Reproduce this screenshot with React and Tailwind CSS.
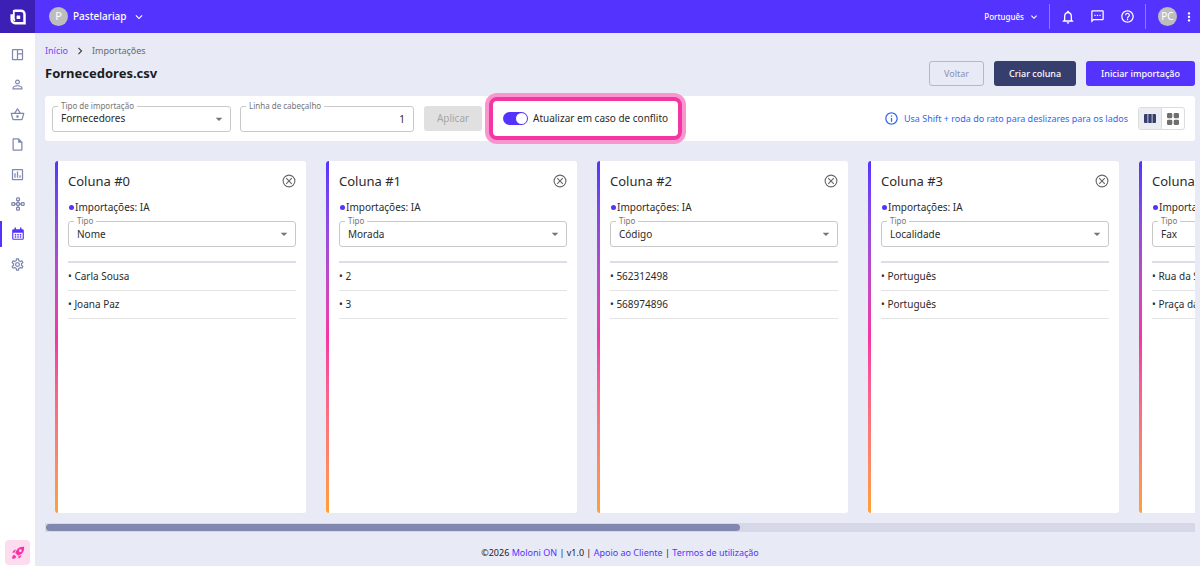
import { useState } from 'react'
import {
  MdOutlineSpaceDashboard,
  MdPersonOutline,
  MdOutlineShoppingBasket,
  MdOutlineInsertDriveFile,
  MdOutlineAssessment,
  MdOutlineSettings,
  MdKeyboardArrowDown,
  MdKeyboardArrowRight,
  MdNotificationsNone,
  MdOutlineSms,
  MdHelpOutline,
  MdMoreVert,
  MdInfoOutline,
  MdArrowDropDown
} from 'react-icons/md'

const columns = [
  { type: 'Nome', rows: ['Carla Sousa', 'Joana Paz'] },
  { type: 'Morada', rows: ['2', '3'] },
  { type: 'Código', rows: ['562312498', '568974896'] },
  { type: 'Localidade', rows: ['Português', 'Português'] },
  { type: 'Fax', rows: ['Rua da Saudade', 'Praça da Liberdade'] }
]

const types = ['Nome', 'Morada', 'Código', 'Localidade', 'Fax']

function Logo() {
  return (
    <svg viewBox="0 0 16 16" className="w-4 h-4" fill="none" stroke="#fff">
      <path d="M4.200 1.700H11a3.500 3.500 0 0 1 3.500 3.500v9H5.200a3.500 3.500 0 0 1-3.500-3.500V5.200" strokeWidth="2.500" />
      <path d="M3.800 1v8.500a2.500 2.500 0 0 0 1.200 2.200" strokeWidth="1.800" />
      <rect x="6.600" y="6.400" width="3.600" height="3.600" rx="0.6" fill="#fff" stroke="none" />
    </svg>
  )
}

function NodesIcon() {
  return (
    <svg viewBox="0 0 24 24" className="w-[14px] h-[14px]" fill="none" stroke="currentColor" strokeWidth="2.200">
      <rect x="9.600" y="1.500" width="4.800" height="4.800" rx="1.200" />
      <rect x="9.600" y="9.600" width="4.800" height="4.800" rx="1.200" />
      <rect x="9.600" y="17.700" width="4.800" height="4.800" rx="1.200" />
      <rect x="1.500" y="9.600" width="4.800" height="4.800" rx="1.200" />
      <rect x="17.700" y="9.600" width="4.800" height="4.800" rx="1.200" />
      <path d="M12 6.300v3.300M12 14.400v3.300M6.300 12h3.300M14.400 12h3.300" />
    </svg>
  )
}

function CalendarIcon() {
  return (
    <svg viewBox="0 0 24 24" className="w-[14px] h-[14px]" fill="currentColor">
      <path
        fillRule="evenodd"
        d="M6 1h2.500v3h7V1H18v3h1.500A2.500 2.500 0 0 1 22 6.500v13a2.500 2.500 0 0 1-2.500 2.500h-15A2.500 2.500 0 0 1 2 19.500v-13A2.500 2.500 0 0 1 4.500 4H6zM4 10v9.500a.5.5 0 0 0 .5.5h15a.5.5 0 0 0 .5-.5V10z"
      />
      <path d="M6.500 12h2.400v2.400H6.500zM10.800 12h2.400v2.400h-2.400zM15.100 12h2.400v2.400h-2.400zM6.500 16h2.400v2.400H6.500zM10.800 16h2.400v2.400h-2.400zM15.100 16h2.400v2.400h-2.400z" />
    </svg>
  )
}

function RocketIcon() {
  return (
    <svg viewBox="0 0 24 24" className="w-[14px] h-[14px]" fill="currentColor">
      <path
        fillRule="evenodd"
        d="M22.500 1.500c-6.500-.6-11 2-14 7.500l-1 3 4.500 4.500 3-1c5.500-3 8.100-7.500 7.500-14zM16 5.700a2.300 2.300 0 1 0 0 4.600 2.300 2.300 0 0 0 0-4.600z"
      />
      <path d="M8.500 6 5.500 7 2 11l4 .5zM18 15.500 17 18.500 13 22l-.5-4zM5.500 15c-2.500.5-3.500 3-3.500 7 4 0 6.500-1 7-3.500z" />
    </svg>
  )
}

function CloseIcon() {
  return (
    <svg viewBox="0 0 14 14" className="w-[14px] h-[14px]" fill="none" stroke="currentColor" strokeWidth="1.100">
      <circle cx="7" cy="7" r="5.900" />
      <path d="m4.200 4.200 5.600 5.600M9.800 4.200 4.200 9.800" />
    </svg>
  )
}

function Sidebar() {
  const items = [
    { name: 'Painel', icon: <MdOutlineSpaceDashboard size={15} /> },
    { name: 'Clientes', icon: <MdPersonOutline size={15} /> },
    { name: 'Vendas', icon: <MdOutlineShoppingBasket size={15} /> },
    { name: 'Documentos', icon: <MdOutlineInsertDriveFile size={15} /> },
    { name: 'Relatórios', icon: <MdOutlineAssessment size={15} /> },
    { name: 'Integrações', icon: <NodesIcon /> },
    { name: 'Ferramentas', icon: <CalendarIcon />, active: true },
    { name: 'Definições', icon: <MdOutlineSettings size={15} /> }
  ]

  return (
    <nav className="w-[35px] shrink-0 bg-white flex flex-col items-center pt-[6px] pb-px">
      {items.map(item => (
        <a
          key={item.name}
          href="#"
          aria-label={item.name}
          className={`w-full h-[30px] flex items-center justify-center ${
            item.active ? 'text-[#5533ff]' : 'text-[#8088b0]'
          }`}
        >
          <span className={`w-full h-[26px] flex items-center justify-center border-l-2 border-r-2 border-r-transparent ${
            item.active ? 'border-l-[#5533ff]' : 'border-l-transparent'
          }`}>
            {item.icon}
          </span>
        </a>
      ))}
      <button
        aria-label="Novidades"
        className="mt-auto w-[25px] h-[25px] rounded-sm bg-[#fddcf0] text-[#f535a3] flex items-center justify-center"
      >
        <RocketIcon />
      </button>
    </nav>
  )
}

function Header() {
  return (
    <header className="h-[33px] shrink-0 bg-[#5533ff] text-white flex items-center">
      <a href="#" aria-label="Moloni ON" className="w-[35px] h-full bg-[#3c1fb5] flex items-center justify-center">
        <Logo />
      </a>
      <button className="ml-[14px] flex items-center text-[10px] font-medium">
        <span className="w-[19px] h-[19px] mr-[5px] rounded-full bg-[#bdbdbd] text-[11px] flex items-center justify-center font-normal">P</span>
        Pastelariap
        <MdKeyboardArrowDown size={14} className="ml-[5px]" />
      </button>
      <div className="ml-auto h-full flex items-center pr-1">
        <button className="flex items-center gap-1 text-[8px] font-medium mr-[9px]">
          Português
          <MdKeyboardArrowDown size={12} />
        </button>
        <div className="w-px h-[25px] bg-[#8f7aff]" />
        <button aria-label="Notificações" className="ml-[10px]"><MdNotificationsNone size={16} /></button>
        <button aria-label="Mensagens" className="ml-[14px]"><MdOutlineSms size={15} /></button>
        <button aria-label="Ajuda" className="ml-[15px]"><MdHelpOutline size={15} /></button>
        <div className="ml-[10px] w-px h-[25px] bg-[#8f7aff]" />
        <button className="ml-3 w-[19px] h-[19px] rounded-full bg-[#bdbdbd] text-[10px] flex items-center justify-center">PC</button>
        <button aria-label="Mais" className="ml-[5px]"><MdMoreVert size={14} /></button>
      </div>
    </header>
  )
}

function SelectField({ id, label, options, value, className }) {
  return (
    <div className={`relative ${className}`}>
      <label htmlFor={id} className="absolute left-[6px] -top-[5px] px-[3px] bg-white text-[8px] leading-[10px] text-[#757575]">
        {label}
      </label>
      <select
        id={id}
        defaultValue={value}
        className="block w-full h-[26px] appearance-none rounded-[3px] border border-[#c9c9c9] bg-transparent pl-2 pr-6 text-[10px] text-[#2b2b2b]"
      >
        {options.map(o => <option key={o}>{o}</option>)}
      </select>
      <MdArrowDropDown size={16} className="absolute right-1 top-[5px] text-[#757575] pointer-events-none" />
    </div>
  )
}

function Toolbar() {
  const [update, setUpdate] = useState(true)

  return (
    <div className="h-[45px] rounded-[3px] bg-white flex items-center pl-[7px] pr-[10px]">
      <SelectField
        id="import-type"
        label="Tipo de importação"
        options={['Fornecedores', 'Clientes', 'Artigos']}
        value="Fornecedores"
        className="w-[179px]"
      />
      <div className="relative w-[174px] ml-[9px]">
        <label htmlFor="header-row" className="absolute left-[6px] -top-[5px] px-[3px] bg-white text-[8px] leading-[10px] text-[#757575]">
          Linha de cabeçalho
        </label>
        <input
          id="header-row"
          defaultValue="1"
          className="block w-full h-[26px] rounded-[3px] border border-[#c9c9c9] px-2 text-right text-[10px] text-[#2b2b2b]"
        />
      </div>
      <button disabled className="ml-[10px] w-[58px] h-[25px] rounded-[3px] bg-[#e0e0e0] text-[#a6a6a6] text-[10px]">
        Aplicar
      </button>

      <label className="ml-[7px] h-[43px] shrink-0 flex items-center gap-[5px] rounded-lg border-4 border-[#f535a3] ring-4 ring-[#f896cd] bg-white px-[10px] text-[10px] text-[#2b2b2b]">
        <input
          type="checkbox"
          role="switch"
          checked={update}
          onChange={e => setUpdate(e.target.checked)}
          className="appearance-none relative w-[25px] h-[13px] rounded-full bg-[#9e9e9e] checked:bg-[#5533ff] after:absolute after:top-px after:left-px checked:after:left-[13px] after:w-[11px] after:h-[11px] after:rounded-full after:bg-white"
        />
        Atualizar em caso de conflito
      </label>

      <div className="ml-auto flex items-center gap-[5px] text-[9px] text-[#3366f0]">
        <MdInfoOutline size={15} />
        Usa Shift + roda do rato para deslizares para os lados
      </div>
      <div className="ml-[10px] h-[23px] flex rounded-[3px] border border-[#dcdcdc] overflow-hidden">
        <button aria-label="Colunas" className="w-[23px] bg-[#ecedf2] border-r border-[#dcdcdc] flex items-center justify-center">
          <svg viewBox="0 0 12 9" className="w-3 h-[9px]" fill="#363e6e">
            <path d="M1 0h2.500v9H1a1 1 0 0 1-1-1V1a1 1 0 0 1 1-1zM4.300 0h3.400v9H4.300zM8.500 0H11a1 1 0 0 1 1 1v7a1 1 0 0 1-1 1H8.500z" />
          </svg>
        </button>
        <button aria-label="Grelha" className="w-[22px] flex items-center justify-center">
          <svg viewBox="0 0 12 12" className="w-3 h-3" fill="#6f6f6f">
            <rect width="5.300" height="5.300" rx="1.300" />
            <rect x="6.700" width="5.300" height="5.300" rx="1.300" />
            <rect y="6.700" width="5.300" height="5.300" rx="1.300" />
            <rect x="6.700" y="6.700" width="5.300" height="5.300" rx="1.300" />
          </svg>
        </button>
      </div>
    </div>
  )
}

function ColumnCard({ index, column }) {
  return (
    <section className="w-[251px] shrink-0 flex rounded-[3px] overflow-hidden bg-white">
      <div className="w-[3px] shrink-0 bg-linear-to-b from-[#5533ff] via-[#f535a3] to-[#ffa033]" />
      <div className="flex-1 px-[10px] pt-[10px]">
        <div className="h-5 flex items-center justify-between">
          <h2 className="text-[13px] leading-5 text-[#2b2b2b]">Coluna #{index}</h2>
          <button aria-label={`Remover coluna ${index}`} className="text-[#666]">
            <CloseIcon />
          </button>
        </div>
        <div className="mt-2 h-4 flex items-center gap-px pl-px text-[10px] text-[#2b2b2b]">
          <span className="w-[5px] h-[5px] rounded-full bg-[#5533ff]" />
          Importações: IA
        </div>
        <SelectField id={`type-${index}`} label="Tipo" options={types} value={column.type} className="mt-[6px]" />
        <ul className="mt-[14px] border-t-2 border-[#dcdcea] text-[10px] text-[#2b2b2b]">
          {column.rows.map((row, i) => (
            <li key={i} className="h-7 flex items-center border-b border-[#e4e4e4] whitespace-nowrap">• {row}</li>
          ))}
        </ul>
      </div>
    </section>
  )
}

export default function App() {
  return (
    <div className="min-h-screen flex flex-col bg-[#e8eaf6] font-['Noto_Sans',sans-serif] text-[#222]">
      <Header />
      <div className="flex-1 flex">
        <Sidebar />
        <main className="flex-1 min-w-0 flex flex-col pl-[10px] pr-[5px]">
          {/* Title and actions */}
          <div className="h-[63px] flex items-start justify-between">
            <div>
              <div className="mt-[11px] h-[14px] flex items-center text-[9px]">
                <a href="#" className="text-[#7047ff]">Início</a>
                <MdKeyboardArrowRight size={14} className="mx-[5px] text-[#444]" />
                <span className="text-[#6b6b6b]">Importações</span>
              </div>
              <h1 className="mt-[6px] text-[13px] leading-[18px] font-bold text-[#1c1c1c]">Fornecedores.csv</h1>
            </div>
            <div className="mt-7 flex gap-[10px] text-[9px]">
              <button className="h-[25px] px-[14px] rounded-[3px] border border-[#b3b7d0] text-[#8a90b0]">Voltar</button>
              <button className="h-[25px] px-[15px] rounded-[3px] bg-[#363e6e] text-white font-medium">Criar coluna</button>
              <button className="h-[25px] px-[15px] rounded-[3px] bg-[#5533ff] text-white font-medium">Iniciar importação</button>
            </div>
          </div>

          <Toolbar />

          {/* Columns */}
          <div className="flex-1 min-h-[352px] mt-5 mb-[10px] pl-[10px] flex gap-5 overflow-hidden">
            {columns.map((column, i) => (
              <ColumnCard key={i} index={i} column={column} />
            ))}
          </div>
          <div className="h-[9px] p-px flex bg-[#d6d8e7]">
            <div className="grow-[29] rounded-full bg-[#8088b0]" />
            <div className="grow-[19]" />
          </div>

          <footer className="h-[34px] pt-[13px] text-center text-[9px] leading-4">
            ©2026 <a href="#" className="text-[#5533ff]">Moloni ON</a> | v1.0 | <a href="#" className="text-[#5533ff]">Apoio ao Cliente</a> | <a href="#" className="text-[#5533ff]">Termos de utilização</a>
          </footer>
        </main>
      </div>
    </div>
  )
}
